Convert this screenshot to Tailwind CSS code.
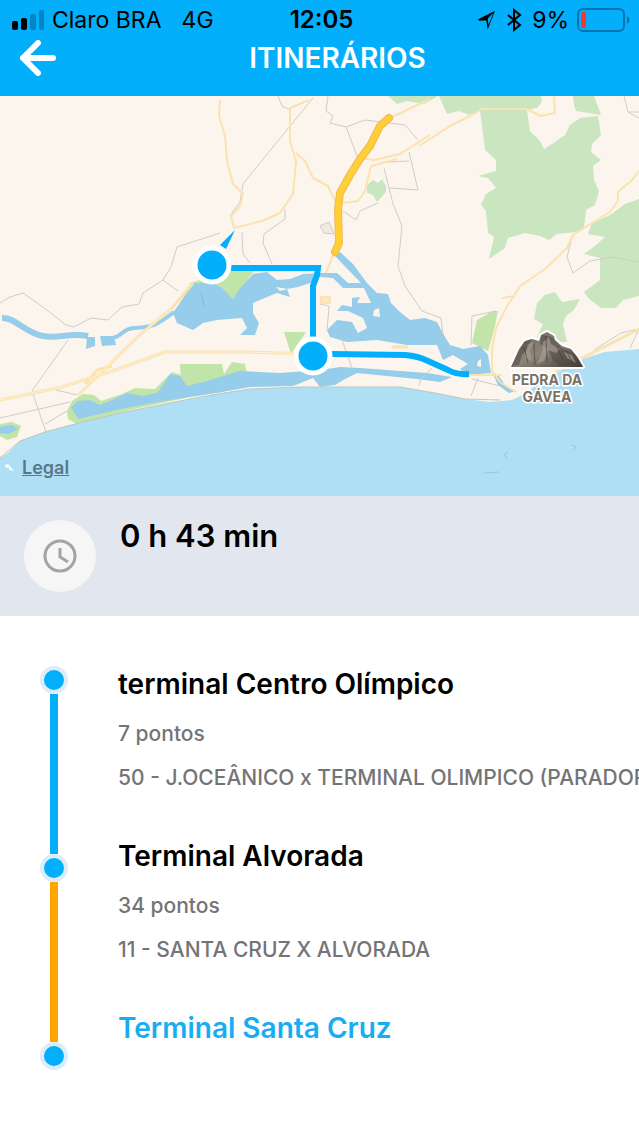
<!DOCTYPE html>
<html lang="pt-BR">
<head>
    <meta charset="UTF-8">
    <meta name="viewport" content="width=device-width, initial-scale=1.0">
    <title>Itinerários</title>
    <script src="https://cdn.jsdelivr.net/npm/@tailwindcss/browser@4"></script>
</head>
<body class="min-h-screen overflow-x-hidden bg-white font-['Inter','Roboto',sans-serif] text-black">
    <header class="bg-[#03aefb]">
        <!-- Status bar -->
        <div class="grid h-10 grid-cols-[1fr_auto_1fr] items-center pr-2 pl-3 text-[23px] leading-10">
            <div class="flex items-center gap-2 whitespace-nowrap">
                <svg class="h-5 w-8 shrink-0" viewBox="0 0 32 20" aria-hidden="true">
                    <rect x="0" y="11" width="6" height="9" rx="2"/>
                    <rect x="9" y="8" width="6" height="12" rx="2"/>
                    <rect x="18" y="4" width="6" height="16" rx="2" fill="#0784c2"/>
                    <rect x="27" y="0" width="6" height="20" rx="2" fill="#0784c2"/>
                </svg>
                <span>Claro BRA</span>
                <span class="pl-3">4G</span>
            </div>
            <span class="text-2xl leading-10 font-semibold">12:05</span>
            <div class="flex items-center justify-end gap-2">
                <svg class="h-5 w-5" viewBox="0 0 20 20" fill="none" stroke="#000" stroke-width="2" stroke-linejoin="miter" aria-hidden="true">
                    <path d="M3 10 17.500 2.500 12 16.500 11 9.500z" stroke-width="1.500"/>
                    <path d="M1 10 19 1 11 9.500z" fill="#000" stroke="none"/>
                    <path d="M12.500 8 17.500 3 12.300 15z" fill="#03aefb" stroke="none"/>
                </svg>
                <svg class="h-6 w-5" viewBox="0 0 20 24" fill="none" stroke="#000" stroke-width="2" aria-hidden="true">
                    <path d="M4 7 16 17 10 22V2L16 7 4 17"/>
                </svg>
                <span>9%</span>
                <svg class="h-6 w-[54px]" viewBox="0 0 54 24" aria-hidden="true">
                    <rect x="1" y="1" width="46" height="22" rx="5" fill="none" stroke="#0773aa" stroke-width="2"/>
                    <rect x="4" y="4" width="5" height="16" rx="2" fill="#f8352f"/>
                    <path d="M50 8q5 4 0 8z" fill="#0773aa"/>
                </svg>
            </div>
        </div>
        <!-- Navigation bar -->
        <div class="flex h-14 items-start px-5">
            <button type="button" aria-label="Voltar" class="h-9 w-9 shrink-0">
                <svg class="h-9 w-9" viewBox="0 0 36 36" fill="none" stroke="#fff" stroke-width="6" stroke-linecap="round" stroke-linejoin="round">
                    <path d="M18 3 3 18 18 33M3 18H33"/>
                </svg>
            </button>
            <h1 class="flex-1 text-center text-[28px] leading-9 font-semibold text-white">ITINERÁRIOS</h1>
        </div>
    </header>

    <main>
        <section class="relative" aria-label="Mapa">
            <svg class="h-[400px] w-full bg-[#fbf5ee]" viewBox="0 0 639 400" preserveAspectRatio="xMidYMid slice">
                <defs>
                    <linearGradient id="rock" x1="0" y1="0" x2="1" y2="1">
                        <stop offset="0" stop-color="#6b645c"/>
                        <stop offset="0.500" stop-color="#8d857a"/>
                        <stop offset="1" stop-color="#3f3932"/>
                    </linearGradient>
                </defs>
                <rect width="639" height="400" fill="#fbf5ee"/>

                <!-- Parks and forest -->
                <g fill="#c9e6c0">
                    <path d="M480 14 500 12 527 14 530 35 540 45 544 53 552 48 565 39 570 29 580 22 598 20 601 39 592 48 591 56 601 64 593 70 594 84 599 95 595 109 586 114 584 131 576 136 557 138 549 144 540 140 525 137 508 142 505 152 489 163 494 141 488 137 486 115 481 109 486 98 496 92 488 82 478 80 496 75 496 64 485 54z"/>
                    <path d="M439 0 541 0 542 6 537 12 527 14 510 12 482 13 469 19 459 15 447 18z"/>
                    <path d="M573 0H594L601 19 576 15 574 9z"/>
                    <path d="M639 103 625 108 617 114 610 119 592 127 588 138 605 141 595 150 584 158 600 162 600 184 584 196 588 202 601 212 616 212 623 204 639 200z"/>
                    <path d="M537 207 545 199 555 196 562 206 580 203 574 214 566 220 563 228 567 246H535L543 228 534 223z"/>
                    <path d="M367 89 373 84 378 87 382 83 386 90 386 96 377 106 373 99 367 97z"/>
                    <path d="M388 0H438L424 8 407 5 397 8z"/>
                </g>
                <g fill="#c1e4a8">
                    <path d="M477 224 493 215 498 215 494 234 488 255 472 247z"/>
                    <path d="M190 187 237 173 254 175 240 193 233 203 218 190 198 187 186 200z"/>
                    <path d="M180 268H214L218 280 194 292 181 286z"/>
                    <path d="M284 236H306L291 258z"/>
                    <path d="M67 315 72 305 83 298 94 299 101 305 122 298 135 292 155 293 172 276 184 280 191 290 210 281 213 268 222 268 224 278 232 266 245 268 247 278 235 284 222 296 190 301 130 314 77 328 68 323z"/>
                    <path d="M0 328 12 326 21 330 17 341 7 344 0 340z"/>
                </g>

                <!-- Ocean -->
                <path fill="#aedff5" d="M0 362 8 357 20 345 45 336 75 328 120 317 160 309 200 301 220 297 250 293 300 291 400 291 435 297 465 303 490 306 512 304 522 299 550 280 582 263 605 256 639 253V400H0z"/>

                <!-- Lagoons, canals and rivers -->
                <g fill="#95cdea">
                    <path d="M173 217 193 187 213 187 222 192 233 203 240 192 253 178 267 176 277 184 290 183 303 178 322 177 337 177 348 187 361 187 335 160 340 156 353 168 367 187 377 197 388 198 391 207 400 216 410 224 425 222 437 226 445 241 450 249 463 253 480 250 488 259 491 277 467 279 460 273 468 268 453 259 443 264 437 249 407 249 377 244 347 246 330 241 327 234 337 224 352 226 358 237 367 232 363 222 348 215 337 215 342 209 352 211 352 202 360 201 357 207 371 207 364 192 343 192 333 182 320 181 310 187 298 191 287 193 290 201 277 197 267 201 253 207 253 217 259 227 255 239 240 239 247 232 242 222 217 224 203 227 193 234 177 227z"/>
                    <path d="M71 311 78 305 90 304 100 309 112 304 127 297 142 300 157 297 165 286 170 278 180 280 187 290 207 285 220 281 240 275 280 277 320 274 340 271 360 272 427 277 452 281 440 286 417 283 357 277 345 283 335 289 320 291 313 282 293 290 250 291 222 296 170 304 130 311 100 318 78 323z"/>
                    <path d="M87 241H95V250L86 253zM100 240H114L116 249 102 250z"/>
                    <path d="M492 276 498 279 506 290 516 295 509 297 498 289z"/>
                    <path d="M0 331 12 329 18 333 8 338 0 337z"/>
                </g>
                <path d="M2 222C15 221 25 237 43 240S70 236 88 240" fill="none" stroke="#95cdea" stroke-width="6"/>
                <path d="M106 243C124 242 120 233 134 232S154 232 174 216" fill="none" stroke="#95cdea" stroke-width="4"/>
                <path d="M374 214 379 212 380 221 373 220zM276 191 288 193 280 195zM478 265 481 263 481 271 477 270z" fill="#fbf5ee"/>
                <path d="M201 196 204 210" fill="none" stroke="#82b9da"/>

                <!-- Minor roads and boundaries -->
                <g fill="none" stroke="#d0ccc8" stroke-width="1">
                    <path d="M313 2 268 57 243 88 240 106 230 120M220 137 177 151 171 171 163 184 143 197 139 208 122 211 108 224 91 222 74 231 66 229 43 211 23 197 10 201 0 207M163 184 178 195"/>
                    <path d="M242 136 243 158 250 167M285 113V123L264 138 263 147 272 168M278 0 282 10 290 14M328 0 326 15 333 20 330 27 346 31 365 24 405 29 418 44M346 31 357 60M384 72 393 108 402 130 398 170 405 190 422 215 441 222 443 239"/>
                    <path d="M343 115 356 124 360 115 378 107M409 56 418 94 390 92M388 66 409 65M471 249 472 220 496 215M320 208 329 210 327 235M341 241 352 272M68 244 32 295 46 336M0 322 70 306M45 328 67 315M56 294 77 299M419 290 421 283 432 272M472 283 500 290M478 282 471 300M567 161 573 177 590 165 612 161 639 166M567 161 571 145M624 0 628 16 639 22M628 16H639M594 254 621 237 639 233M630 252 638 235"/>
                    <path d="M320 130 329 126 334 138 324 137z" fill="#f1ece2"/>
                </g>
                <path d="M0 362 20 345 45 336 75 328 120 317 200 301 250 293 300 291 400 291 435 297 465 303 500 304" fill="none" stroke="#bdc7bb" stroke-width="1"/>

                <!-- Secondary roads -->
                <g fill="none" stroke="#fbe2ae" stroke-width="2" stroke-linejoin="round">
                    <path d="M220 4 219 20 225 40 227 65 233 88 243 98 240 110 231 120 234 132 262 125 280 117 293 98 296 65 290 45 290 12 309 4M296 57 305 65 313 82 328 90 335 105"/>
                    <path d="M342 107 358 105 365 95 371 70M360 62 374 64 400 58 430 39M371 70 397 63M390 22 430 3M419 50 450 30 470 20 482 13 527 13 540 20 555 17 554 0"/>
                    <path d="M502 202 514 200 520 190 545 173 567 152 573 139 592 127 610 116 618 105 618 96 632 84 639 75M514 200 507 210 496 232 492 252 492 275 500 286 516 296M502 279H470M334 157 326 177"/>
                    <path d="M0 304 62 291 115 274 165 256 245 256 310 258M78 299 100 278 120 258 142 237 172 212 193 187M85 288 97 274 112 270M392 251H408M555 276 600 253 639 233" stroke-width="3"/>
                    <path d="M0 304 62 291 115 274 165 256 245 256 310 258M78 299 100 278 120 258 142 237 172 212" stroke="#fdf2d5" stroke-width="1"/>
                    <path d="M321 201H330V207H321z" fill="#fbe8c8"/>
                </g>

                <!-- Express way -->
                <g fill="none" stroke-linecap="round" stroke-linejoin="round">
                    <path d="M389 22 380 30 370 50 360 63 350 79 340 97 338 113 339 147 335 156" stroke="#f3b955" stroke-width="8"/>
                    <path d="M389 22 380 30 370 50 360 63 350 79 340 97 338 113 339 147 335 156" stroke="#fecf36" stroke-width="6"/>
                </g>

                <!-- Islands -->
                <path d="M5 369 8 368 14 375 9 374 9 371 6 372z" fill="#fff"/>
                <path d="M508 356 504 359 508 363M484 377 499 376M572 349 576 351 573 355" fill="none" stroke="#93c8e1"/>

                <!-- Bus route -->
                <g fill="none" stroke="#03aefb" stroke-width="6" stroke-linejoin="miter">
                    <path d="M231 172H318L317 179 313 190V242"/>
                    <path d="M332 258 405 259Q418 260 428 265L448 274Q457 279 469 278"/>
                    <path d="M220 149 235 134 226 153z" fill="#03aefb" stroke="none"/>
                </g>
                <g fill="#03aefb" stroke="#fff" stroke-width="5">
                    <circle cx="212" cy="169" r="17"/>
                    <circle cx="313" cy="260" r="17"/>
                </g>

                <!-- Pedra da Gávea -->
                <g>
                    <path d="M511 271 519 253 525 245 532 243 539 245 541 239 547 236 554 240 555 244 562 250 571 253 578 262 583 271z" fill="url(#rock)" stroke="#fff" stroke-width="4" stroke-linejoin="round" paint-order="stroke"/>
                    <path d="M511 271 518 257 524 246 531 243 529 251 522 259 519 269zM542 239 540 248 548 252 553 265 561 270H583L575 258 562 252 552 241z" fill="#4a433b" opacity="0.500"/>
                    <path d="M528 248 534 246 530 255 532 265 525 261zM543 246 549 241 551 248 560 253 556 257 548 254 544 265 537 268 542 256zM564 256 572 259 576 267 567 262z" fill="#aaa39a" opacity="0.600"/>
                    <path d="M524 251 528 267M534 247 535 269M546 240 547 266M557 250 563 265M566 254 573 268" fill="none" stroke="#37312b" opacity="0.500"/>
                    <g class="font-['Inter','Roboto',sans-serif] font-bold" font-size="14" text-anchor="middle" fill="#797067" stroke="#fff" stroke-width="3" stroke-linejoin="round" paint-order="stroke">
                        <text x="547" y="289">PEDRA DA</text>
                        <text x="547" y="306">GÁVEA</text>
                    </g>
                </g>
            </svg>
            <a href="#" class="absolute bottom-4 left-[22px] text-lg leading-6 font-semibold text-[#58788a] underline">Legal</a>
        </section>

        <section class="flex h-[120px] gap-6 bg-[#e1e6ef] px-6 pt-6">
            <div class="grid h-[72px] w-[72px] shrink-0 place-items-center rounded-full bg-[#f6f6f7]">
                <svg class="h-9 w-9" viewBox="0 0 36 36" fill="none" stroke="#a3a3a4" stroke-width="3" aria-hidden="true">
                    <circle cx="18" cy="18" r="15"/>
                    <path d="M18 10V19L26 24"/>
                </svg>
            </div>
            <p class="text-[31px] leading-8 font-semibold">0 h 43 min</p>
        </section>

        <section class="flex gap-[50px] pt-[50px] pl-10" aria-label="Paradas">
            <!-- Line track -->
            <div class="flex shrink-0 flex-col items-center" aria-hidden="true">
                <span class="h-7 w-7 rounded-full border-4 border-[#dcedf9] bg-[#03aefb]"></span>
                <span class="h-40 w-2 bg-[#03aefb]"></span>
                <span class="h-7 w-7 rounded-full border-4 border-[#dcedf9] bg-[#03aefb]"></span>
                <span class="h-40 w-2 bg-[#ffa500]"></span>
                <span class="h-7 w-7 rounded-full border-4 border-[#dcedf9] bg-[#03aefb]"></span>
            </div>
            <ol class="min-w-0 flex-1 text-[21px] leading-6 font-medium whitespace-nowrap text-[#747476]">
                <li class="pb-12">
                    <h2 class="text-[28px] leading-9 font-semibold text-black">terminal Centro Olímpico</h2>
                    <p class="pt-5">7 pontos</p>
                    <p class="overflow-hidden pt-5">50 - J.OCEÂNICO x TERMINAL OLIMPICO (PARADOR)</p>
                </li>
                <li class="pb-12">
                    <h2 class="text-[28px] leading-9 font-semibold text-black">Terminal Alvorada</h2>
                    <p class="pt-5">34 pontos</p>
                    <p class="overflow-hidden pt-5">11 - SANTA CRUZ X ALVORADA</p>
                </li>
                <li>
                    <h2 class="text-[28px] leading-9 font-semibold text-[#17adf1]">Terminal Santa Cruz</h2>
                </li>
            </ol>
        </section>
    </main>
</body>
</html>
